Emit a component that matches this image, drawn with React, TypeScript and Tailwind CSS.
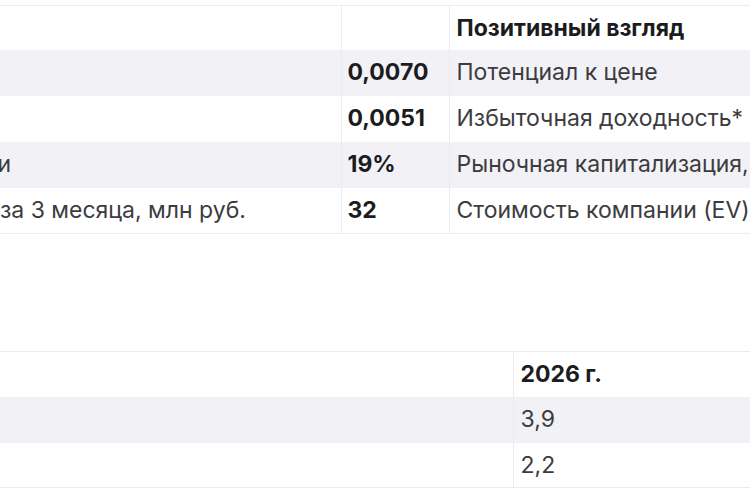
import React from "react";

const font = { fontFamily: "Inter, 'Noto Sans', sans-serif" };

interface MetricRow {
  label: string;
  value: string;
  right: string;
}

const metrics: MetricRow[] = [
  { label: "Коэффициент бета", value: "0,0070", right: "Потенциал к цене" },
  { label: "Альфа", value: "0,0051", right: "Избыточная доходность*" },
  { label: "Доля акций в обращении", value: "19%", right: "Рыночная капитализация, млрд руб." },
  { label: "Среднедневной оборот за 3 месяца, млн руб.", value: "32", right: "Стоимость компании (EV), млрд руб." },
];

const forecast = [
  { label: "Дивидендная доходность, %", y2026: "3,9" },
  { label: "P/E", y2026: "2,2" },
];

export default function App() {
  return (
    <div className="w-[750px] h-[500px] overflow-hidden bg-white text-[23px] text-[#3c3c40]" style={font}>
      {/* верхняя таблица — обрезана слева и справа */}
      <div className="pt-[5px]">
        <table className="w-[1155px] ml-[-286px] table-fixed border-collapse border-t border-b border-[#ebebf0]">
          <colgroup>
            <col className="w-[627px]" />
            <col className="w-[108px]" />
            <col className="w-[420px]" />
          </colgroup>
          <tbody>
            <tr className="h-[44px] bg-white">
              <td className="px-[12px]"></td>
              <td className="border-l border-[#ebebf0] px-[6px]"></td>
              <td className="border-l border-[#ebebf0] px-[7px] font-bold text-[#1c1c1e] whitespace-nowrap">Позитивный взгляд</td>
            </tr>
            {metrics.map((row, i) => (
              <tr key={row.value} className={i % 2 === 0 ? "h-[46px] bg-[#f2f1f6]" : "h-[46px] bg-white"}>
                <td className="px-[12px] whitespace-nowrap overflow-hidden">{row.label}</td>
                <td className="border-l border-[#ebebf0] px-[6px] font-bold text-[#1c1c1e]">{row.value}</td>
                <td className="border-l border-[#ebebf0] px-[7px] whitespace-nowrap">{row.right}</td>
              </tr>
            ))}
          </tbody>
        </table>
      </div>

      {/* нижняя таблица — прогноз */}
      <div className="pt-[117px]">
        <table className="w-[1152px] ml-[-339px] table-fixed border-collapse border-t border-b border-[#ebebf0]">
          <colgroup>
            <col className="w-[852px]" />
            <col className="w-[300px]" />
          </colgroup>
          <tbody>
            <tr className="h-[45px] bg-white">
              <td className="px-[12px]"></td>
              <td className="border-l border-[#ebebf0] px-[7px] font-bold text-[#1c1c1e]">2026 г.</td>
            </tr>
            {forecast.map((row, i) => (
              <tr key={row.label} className={i % 2 === 0 ? "h-[46px] bg-[#f2f1f6]" : "h-[45px] bg-white"}>
                <td className="px-[12px] whitespace-nowrap">{row.label}</td>
                <td className="border-l border-[#ebebf0] px-[7px]">{row.y2026}</td>
              </tr>
            ))}
          </tbody>
        </table>
      </div>
    </div>
  );
}
